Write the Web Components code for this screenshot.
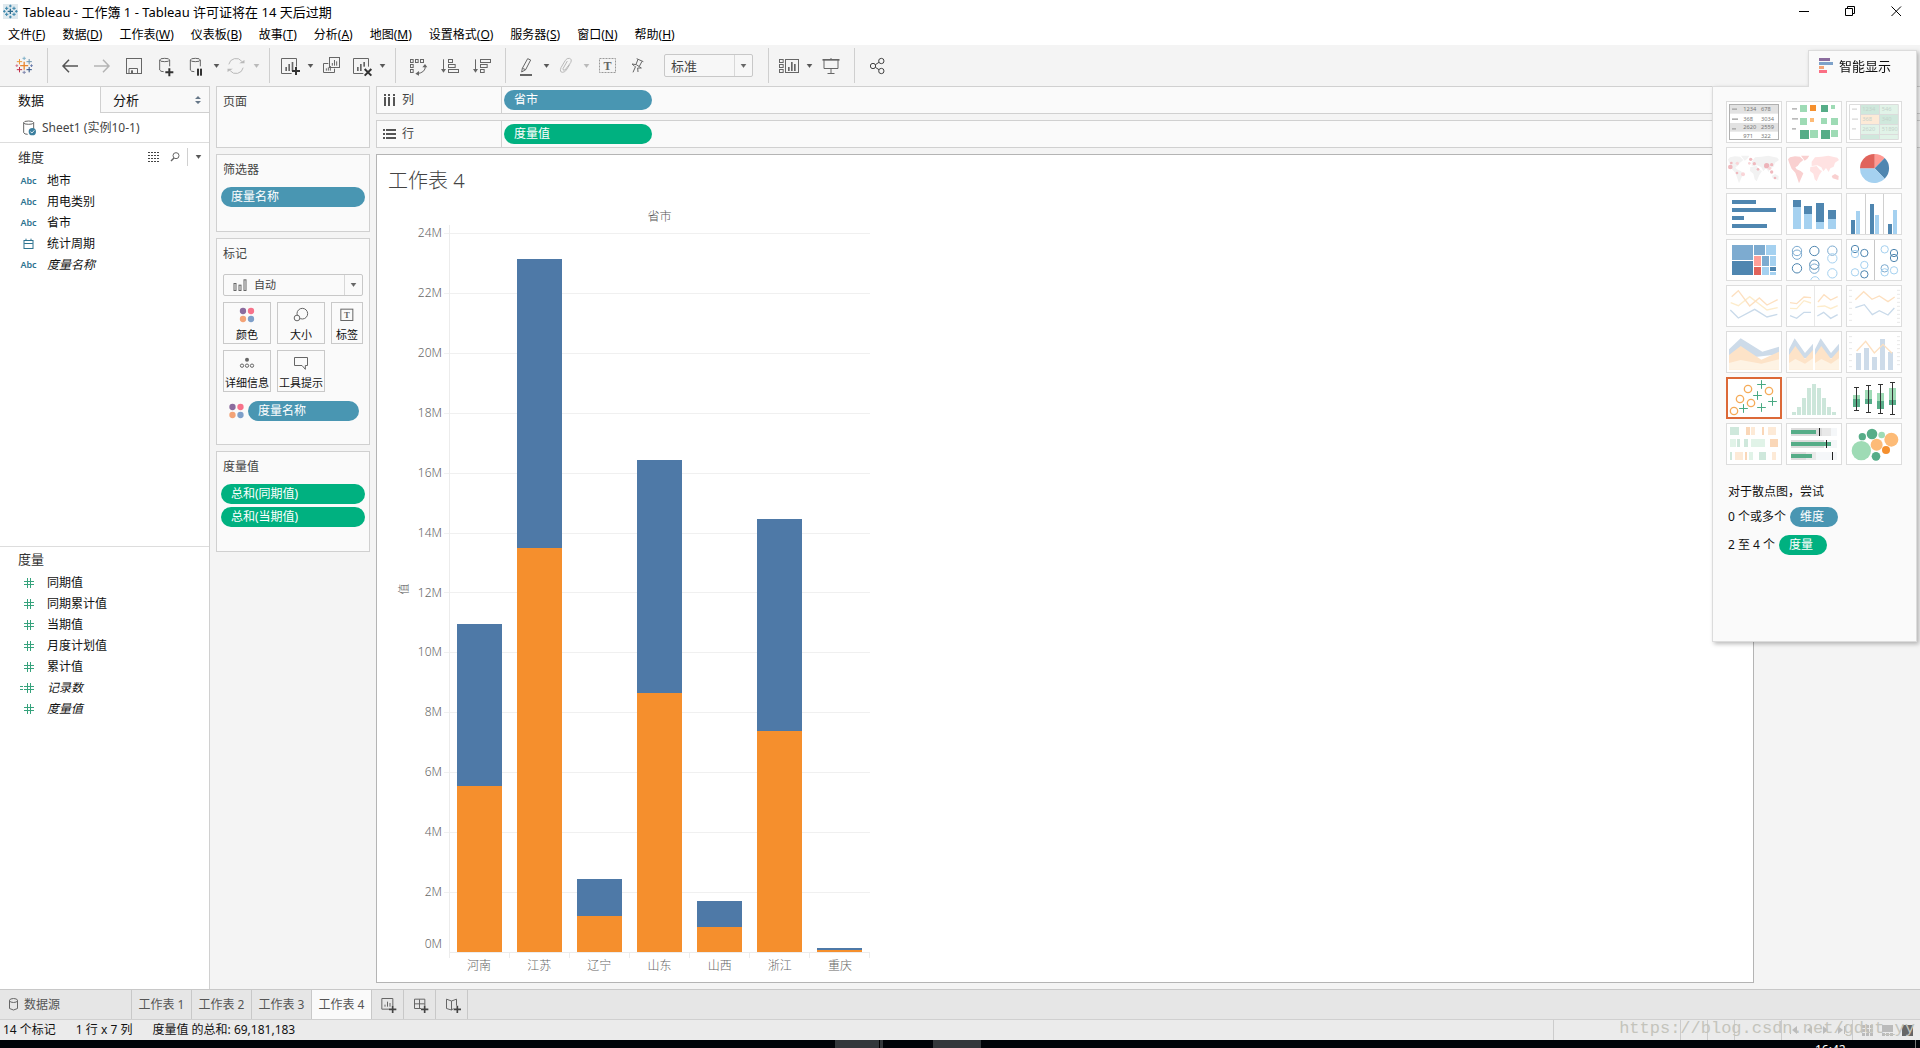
<!DOCTYPE html>
<html lang="zh-CN">
<head>
<meta charset="utf-8">
<title>Tableau - 工作簿 1</title>
<style>
  html, body { margin: 0; height: 100%; }
  body { font: 12px/16px "Noto Sans", "Noto Sans CJK SC", sans-serif; color: #111; background: #f4f4f4; overflow: hidden; }
</style>
</head>
<body>
<app-shell></app-shell>
<script>
const BASE = `*{box-sizing:border-box} button,select{font:inherit;color:inherit;margin:0;padding:0;border:0;background:none}
a{color:inherit;text-decoration:none} svg{display:block;flex:none} h1,h2,h3,ul,p{margin:0;padding:0;font:inherit;list-style:none}`;
function define(name, css, html) {
  customElements.define(name, class extends HTMLElement {
    constructor() {
      super();
      this.attachShadow({ mode: 'open' });
    }
    connectedCallback() {
      const body = typeof html === 'function' ? html(this) : html;
      this.shadowRoot.innerHTML = `<style>${BASE}${css}</style>${body}`;
    }
  });
}
/* Icons are drawn on a grid of three units per pixel. */
const icon = (cx, cy, body, w = 24, h = 24) =>
  `<svg width="${w}" height="${h}" viewBox="${cx * 3 - w * 1.5} ${cy * 3 - h * 1.5} ${w * 3} ${h * 3}" fill="none" stroke="#666" stroke-width="3" aria-hidden="true">${body}</svg>`;
const plus = (x, y, r, c, w = 3) => `<path d="M${x - r} ${y}H${x + r}M${x} ${y - r}V${y + r}" stroke="${c}" stroke-width="${w}"/>`;
const rect = (x, y, w, h, c) => `<rect x="${x}" y="${y}" width="${w}" height="${h}" fill="${c}" stroke="none"/>`;
const box = (x, y, w, h) => `<rect x="${x}" y="${y}" width="${w}" height="${h}"/>`;
const dot = (x, y, r, c) => `<circle cx="${x}" cy="${y}" r="${r}" fill="${c}" stroke="none"/>`;
const ring = (x, y, r, c) => `<circle cx="${x}" cy="${y}" r="${r}" fill="none" stroke="${c}" stroke-width="3"/>`;
const line = (d, c, w = 3) => `<path d="${d}" fill="none" stroke="${c}" stroke-width="${w}"/>`;
const area = (d, c) => `<path d="${d}" fill="${c}" stroke="none"/>`;
const cyl = (x, y) => `<ellipse cx="${x + 15}" cy="${y + 5}" rx="15" ry="5"/><path d="M${x} ${y + 5}V${y + 35}Q${x + 2} ${y + 40} ${x + 12} ${y + 40}M${x + 30} ${y + 5}V${y + 24}"/>`;
const caretSvg = (c = '#555') => `<svg width="7" height="4" viewBox="0 0 7 4" aria-hidden="true"><path d="M1 0H6L3.5 3.500Z" fill="${c}" stroke="${c}" stroke-width=".5"/></svg>`;
const fourDots = dot(-12, -12, 9.5, '#8b6c9e') + dot(12, -12, 9.5, '#f7728a') + dot(-12, 12, 9.5, '#f3a377') + dot(12, 12, 9.5, '#7e9fc9');

const ICONS = {
  logo: icon(23.5, 66, plus(71, 197, 12, '#e8852f', 4) + plus(57, 185, 8, '#eb9a3c') + plus(86, 185, 8, '#6e93ab') + plus(57, 209, 8, '#c1304a') + plus(86, 209, 8, '#2d4f85') + plus(71, 175, 5, '#7fb0c8') + plus(71, 217, 5, '#8088ae') + plus(49, 197, 4, '#d4748a') + plus(93, 197, 4, '#6d7fae')),
  back: icon(70, 66, line('M189 198H234M207 179L189 198L207 217', '#555', 4.5)),
  fwd: icon(102, 66, line('M282 198H327M309 179L327 198L309 217', '#b4b4b4', 4.5)),
  save: icon(134, 66, box(379.5, 175.5, 45, 45) + '<path d="M387 220V205.500H412.500V220"/>' + rect(393, 211, 6, 9, '#666')),
  addds: icon(166, 66, cyl(479, 175) + plus(508, 217, 12, '#333', 6)),
  pause: icon(196, 66, cyl(571, 175) + rect(591, 206, 6, 21, '#333') + rect(600, 206, 6, 21, '#333')),
  refresh: icon(235.500, 66, `<g stroke="#b9b9b9">${'<path d="M685 193A22 22 0 0 1 724 184M728 203A22 22 0 0 1 689 212"/>'}</g>` + area('M716 190H732V180ZM697 206H681V216Z', '#b9b9b9')),
  newsheet: icon(290, 66, '<path d="M889.500 200V175.500H844.500V220.500H875"/>' + rect(856, 201, 5, 12, '#666') + rect(865, 192, 5, 21, '#666') + rect(875, 186, 5, 27, '#666') + plus(888, 213, 12, '#333', 6)),
  dup: icon(331, 66, box(988.500, 172.500, 30, 30) + '<path d="M985 190.500H970.500V217.500H1003.500V206"/>' + line('M997 197V189M1003.500 197V180M1010 197V184M979 212V205M985 212V202M991 212V198', '#666')),
  clear: icon(361, 66, '<path d="M1105.500 200V175.500H1060.500V220.500H1090"/>' + rect(1071, 201, 5, 12, '#666') + rect(1080, 192, 5, 21, '#666') + rect(1090, 186, 5, 14, '#666') + line('M1094 207L1114 227M1114 207L1094 227', '#333', 6)),
  swap: icon(417, 66, box(1228.500, 178.500, 8, 9) + box(1243.500, 178.500, 8, 9) + box(1258.500, 178.500, 9, 9) + box(1228.500, 193.500, 8, 9) + box(1228.500, 208.500, 8, 9) + line('M1273 198Q1274 218 1248 221', '#666') + area('M1264 202L1272 192L1279 202ZM1254 213L1243 221L1254 227Z', '#666')),
  asc: icon(450, 66, line('M1330.500 178V214', '#666') + area('M1323 207H1338L1330.500 218Z', '#666') + box(1345.500, 178.500, 12, 9) + box(1345.500, 193.500, 20, 9) + box(1345.500, 208.500, 30, 9)),
  desc: icon(482, 66, line('M1426.500 178V214', '#666') + area('M1419 207H1434L1426.500 218Z', '#666') + box(1441.500, 178.500, 30, 9) + box(1441.500, 193.500, 20, 9) + box(1441.500, 208.500, 11, 9)),
  pen: icon(528, 66, '<g transform="translate(1440 0)"><path d="M133 205L149 176L158 180L143 209L131 216ZM133 205L143 209"/>' + rect(126, 222, 36, 6, '#666') + '</g>'),
  clip: icon(565, 66, '<g transform="translate(1440 0)" stroke="#b9b9b9"><path d="M259 183L246 206Q245 213 252 210L269 188Q274 177 265 175Q258 174 253 181L240 203Q235 216 244 217Q252 217 256 210L266 194"/></g>'),
  text: icon(607, 66, '<rect x="1798.500" y="175.500" width="48" height="42" stroke-dasharray="6 3" stroke="#999"/><text x="1822.500" y="209" font-family="Liberation Serif" font-weight="bold" font-size="36" text-anchor="middle" fill="#666" stroke="none">T</text>'),
  pin: icon(637, 66, '<g transform="translate(1440 0)"><path d="M470 176L490 185M474 178L468 193M486 184L478 199M456 192Q468 190 484 204M456 192L464 199M484 204L473 204M467 199L459 217M473 204L474 216"/></g>'),
  cards: icon(791, 66, '<g transform="translate(1440 0)">' + box(904.500, 178.500, 11, 9) + box(904.500, 193.500, 11, 9) + box(904.500, 208.500, 11, 9) + box(922.500, 178.500, 39, 39) + rect(930, 201, 5, 12, '#666') + rect(939, 186, 5, 27, '#666') + rect(948, 192, 5, 21, '#666') + '</g>'),
  present: icon(830.500, 66, '<g transform="translate(1440 0)">' + rect(1026, 177, 51, 5, '#666') + '<path d="M1030.500 180V205.500H1072.500V180M1051.500 174V178M1051.500 206V220M1041 220.500H1062"/></g>'),
  share: icon(877, 66, '<g transform="translate(1440 0)" stroke="#444">' + '<circle cx="1179" cy="198" r="8"/><circle cx="1204" cy="183" r="8"/><circle cx="1204" cy="213" r="8"/><path d="M1186 194L1197 187M1186 202L1197 209"/></g>')
};

define('title-bar', `:host{display:flex;align-items:center;height:23px;background:#fff;padding:0 1px 0 3px;color:#000}
 h1{flex:1;margin-left:5px;font-size:13px} button{width:46px;height:22px;display:grid;place-items:center}`,
 `<svg width="15" height="15" viewBox="0 0 45 45" aria-hidden="true"><rect width="45" height="45" fill="#dfe9ee"/>${plus(22, 22, 8, '#2e6c8e', 4) + plus(11, 13, 5, '#3c86ab', 3) + plus(33, 13, 5, '#3c86ab', 3) + plus(11, 31, 5, '#3c86ab', 3) + plus(33, 31, 5, '#3c86ab', 3) + plus(22, 6, 4, '#3c86ab', 3) + plus(22, 39, 4, '#3c86ab', 3) + plus(4, 22, 4, '#3c86ab', 3) + plus(40, 22, 4, '#3c86ab', 3)}</svg>
 <h1>Tableau - 工作簿 1 - Tableau 许可证将在 14 天后过期</h1>
 <button aria-label="最小化"><svg width="11" height="11"><path d="M0 5.5H10" stroke="#000"/></svg></button>
 <button aria-label="还原"><svg width="11" height="11" fill="none" stroke="#000"><path d="M.5 2.500H7.500V9.500H.5ZM2.500 2V.5H9.500V7.500H8"/></svg></button>
 <button aria-label="关闭"><svg width="11" height="11" stroke="#000"><path d="M.5 .5L10 10M10 .5L.5 10"/></svg></button>`);

define('menu-bar', `:host{display:flex;gap:17px;height:22px;padding:4px 8px 0;background:#fff;color:#000} button{height:16px;white-space:nowrap}`,
 () => [['文件', 'F'], ['数据', 'D'], ['工作表', 'W'], ['仪表板', 'B'], ['故事', 'T'], ['分析', 'A'], ['地图', 'M'], ['设置格式', 'O'], ['服务器', 'S'], ['窗口', 'N'], ['帮助', 'H']]
   .map(([t, k]) => `<button>${t}(<u>${k}</u>)</button>`).join(''));

define('tool-button', `:host{display:block;width:var(--w,32px)} button{width:100%;height:34px;display:grid;place-items:center;overflow:hidden}`,
 el => `<button aria-label="${el.getAttribute('label') || '更多'}">${el.getAttribute('icon') === 'caret' ? caretSvg(el.hasAttribute('off') ? '#b9b9b9' : '#555') : ICONS[el.getAttribute('icon')]}</button>`);

define('drop-down', `:host{display:flex;align-items:center;border:1px solid #c8c8c8;border-radius:2px;background:#fafafa;color:#444}
 select{appearance:none;flex:1;min-width:0;align-self:stretch;padding-left:6px;outline:0}
 span{width:18px;align-self:stretch;border-left:1px solid #d8d8d8;display:grid;place-items:center;pointer-events:none}`,
 el => `<slot></slot><select aria-label="${el.getAttribute('label')}"><option>${el.getAttribute('value')}</option></select><span>${caretSvg('#666')}</span>`);

const tb = (i, l, w, off = '') => `<tool-button icon="${i}" label="${l}" style="--w:${w}px" ${off}></tool-button>`;
define('tool-bar', `:host{display:flex;height:41px;align-items:center;background:#f4f4f4}
 .g{display:flex;align-items:center;height:35px;padding:0 7px 0 6px;border-right:1px solid #cfcfcf}
 .g:first-of-type{padding:0} .g:last-of-type{border:0} drop-down{width:89px;height:23px;margin:0 8px 0 12px;font-size:13px;background:#f7f7f7}`,
 `<div class="g">${tb('logo', '开始页面', 47)}</div>
 <div class="g">${tb('back', '撤消', 32) + tb('fwd', '恢复', 32) + tb('save', '保存', 32) + tb('addds', '新建数据源', 32) + tb('pause', '暂停自动更新', 28) + tb('caret', '更新选项', 12) + tb('refresh', '运行更新', 28) + tb('caret', '运行选项', 12, 'off')}</div>
 <div class="g">${tb('newsheet', '新建工作表', 28) + tb('caret', '新建选项', 12) + tb('dup', '复制', 30) + tb('clear', '清除工作表', 30) + tb('caret', '清除选项', 12)}</div>
 <div class="g">${tb('swap', '交换行和列', 32) + tb('asc', '升序排序', 32) + tb('desc', '降序排序', 32)}</div>
 <div class="g">${tb('pen', '突出显示', 28) + tb('caret', '突出显示选项', 12) + tb('clip', '组成员', 28) + tb('caret', '分组选项', 12, 'off') + tb('text', '显示标记标签', 30) + tb('pin', '固定轴', 30)}<drop-down label="适合" value="标准"></drop-down></div>
 <div class="g">${tb('cards', '显示/隐藏卡', 28) + tb('caret', '卡选项', 12) + tb('present', '演示模式', 32)}</div>
 <div class="g">${tb('share', '共享', 32)}</div>`);

define('field-item', `:host{display:block} a{display:flex;align-items:center;height:21px}
 .i{width:47px;padding-left:18px;display:flex;justify-content:center;padding-right:8px;color:#2d7390;font-size:9px;font-weight:600} :host([italic]) .t{font-style:italic}`,
 el => {
   const k = el.getAttribute('kind');
   const hash = '<path d="M-15 -4.500H15M-15 4.500H15M-4.500 -15V15M4.500 -15V15"/>';
   const g = { abc: 'Abc',
     date: icon(0, 0, '<g stroke="#2d7390"><rect x="-13.500" y="-10.500" width="27" height="24"/><path d="M-13 -1.500H13M-7.500 -10V-16M7.500 -10V-16"/></g>', 13, 12),
     num: icon(0, 0, `<g stroke="#36a27c">${hash}</g>`, 18, 12),
     calc: icon(0, 0, `<g stroke="#36a27c">${hash}<path d="M-27 -4.500H-18M-27 4.500H-18"/></g>`, 18, 12) }[k];
   return `<a href="#"><span class="i">${g}</span><span class="t"><slot></slot></span></a>`;
 });

const fields = list => list.map(([k, t, i]) => `<field-item kind="${k}" ${i || ''}>${t}</field-item>`).join('');
define('data-pane', `:host{display:flex;flex-direction:column;width:210px;background:#fff;border-right:1px solid #d0d0d0;flex:none}
 .tabs{display:flex;height:27px;font-size:13px;border-top:1px solid #d0d0d0}
 .tabs button{width:100px;padding-left:18px;text-align:left}
 .tabs .b{flex:1;display:flex;align-items:center;justify-content:space-between;background:#f9f9f9;border:1px solid #d0d0d0;border-width:0 0 1px 1px;padding:0 8px 0 12px}
 .src{display:flex;align-items:center;height:30px;padding-left:20px;gap:4px;color:#444;border-bottom:1px solid #ddd}
 .dim{flex:403 1 0;border-bottom:1px solid #ddd} .mea{flex:443 1 0}
 header{display:flex;align-items:center;height:27px;padding-left:18px;font-size:13px;color:#333} .mea header{height:26px;padding-bottom:2px}
 h2{flex:1} header button{display:grid;place-items:center;height:18px}
 .l{width:22px}.m{width:19px;margin-right:3px}.c{width:22px;border-left:1px solid #d0d0d0}`,
 `<div class="tabs" role="tablist"><button role="tab">数据</button><button role="tab" class="b">分析<svg width="6" height="8" viewBox="0 0 6 8"><path d="M0 3L3 0L6 3ZM0 5L3 8L6 5Z" fill="#667788"/></svg></button></div>
 <a class="src" href="#">${icon(29, 128, cyl(71, 363) + dot(97, 395, 11, '#3b7f9f') + line('M91 395L96 399L103 391', '#fff', 2.5), 18, 18)}<span>Sheet1 (实例10-1)</span></a>
 <section class="dim"><header><h2>维度</h2><button class="l" aria-label="查看数据"><svg width="12" height="10" stroke="#444" stroke-dasharray="2 1"><path d="M0 .5H12M0 3.500H12M0 6.500H12M0 9.500H12"/></svg></button><button class="m" aria-label="查找">${icon(0, 0, '<circle cx="3" cy="-4" r="9"/><path d="M-3 3L-12 12" stroke-width="4"/>', 12, 12)}</button><button class="c" aria-label="菜单">${caretSvg()}</button></header>
 ${fields([['abc', '地市'], ['abc', '用电类别'], ['abc', '省市'], ['date', '统计周期'], ['abc', '度量名称', 'italic']])}</section>
 <section class="mea"><header><h2>度量</h2></header>
 ${fields([['num', '同期值'], ['num', '同期累计值'], ['num', '当期值'], ['num', '月度计划值'], ['num', '累计值'], ['calc', '记录数', 'italic'], ['num', '度量值', 'italic']])}</section>`);

define('pill-tag', `:host{display:block} button{display:block;width:100%;height:20px;border-radius:10px;background:#4996b2;color:#fff;text-align:left;padding:0 10px;white-space:nowrap} :host([green]) button{background:#00b180}`,
 '<button><slot></slot></button>');

define('shelf-card', `:host{display:block;background:#fafafa;border:1px solid #d0d0d0;padding:7px 4px 0;color:#444} h3{padding:0 2px}`,
 el => `<h3>${el.getAttribute('heading')}</h3><slot></slot>`);

define('mark-button', `:host{display:block} button{width:100%;height:42px;border:1px solid #c9c9c9;background:#fafafa;display:flex;flex-direction:column;align-items:center;justify-content:space-between;padding:3px 0 0;font-size:11px;color:#111;white-space:nowrap}`,
 '<button><slot name="icon"></slot><slot></slot></button>');

const mb = (t, body) => `<mark-button><span slot="icon">${icon(0, 0, body, 20, 18)}</span>${t}</mark-button>`;
define('card-column', `:host{display:flex;flex-direction:column;gap:6px;width:154px;flex:none}
 .p{height:62px}.f{height:78px}.m{height:207px}.v{height:101px} .f pill-tag,.v pill-tag{margin-top:9px}
 .v pill-tag+pill-tag{margin-top:3px} drop-down{margin:12px 2px 6px;height:22px;font-size:11px;padding-left:9px}
 .grid{display:grid;grid-template-columns:48px 48px 32px;gap:6px;padding:0 2px}
 .row{display:flex;align-items:center;margin-top:9px;padding:0 6px 0 7px} .row pill-tag{flex:1;margin-left:3px}`,
 `<shelf-card class="p" heading="页面"></shelf-card>
 <shelf-card class="f" heading="筛选器"><pill-tag>度量名称</pill-tag></shelf-card>
 <shelf-card class="m" heading="标记">
  <drop-down label="标记类型" value="自动">${icon(0, 0, box(-19.500, -4.500, 6, 21) + box(-4.500, .5, 6, 16) + box(10.500, -15.500, 6, 32), 15, 12)}</drop-down>
  <div class="grid">${mb('颜色', fourDots)}${mb('大小', '<circle cx="4" cy="-4" r="16"/><circle cx="-12" cy="9" r="8.500" fill="#fafafa"/>')}${mb('标签', '<rect x="-18.500" y="-17.500" width="36" height="34"/><text x="-.5" y="8" font-family="Liberation Serif" font-weight="bold" font-size="26" text-anchor="middle" fill="#666" stroke="none">T</text>')}${mb('详细信息', dot(0, -10, 6, '#666') + '<circle cx="-15" cy="8" r="5"/><circle cx="0" cy="8" r="5"/><circle cx="15" cy="8" r="5"/>')}${mb('工具提示', '<path d="M-19.500 -16.500H19.500V7.500H13V19L3 7.500H-19.500Z"/>')}</div>
  <div class="row">${icon(0, 0, fourDots, 17, 18)}<pill-tag>度量名称</pill-tag></div>
 </shelf-card>
 <shelf-card class="v" heading="度量值"><pill-tag green>总和(同期值)</pill-tag><pill-tag green>总和(当期值)</pill-tag></shelf-card>`);

define('shelf-row', `:host{display:flex;height:28px;background:#fafafa;border:1px solid #d0d0d0;border-right:0;color:#444}
 .l{display:flex;align-items:center;gap:6px;width:125px;padding-left:6px;border-right:1px solid #d0d0d0} .d{padding:3px 2px;flex:1} ::slotted(pill-tag){width:148px}`,
 el => `<div class="l">${el.getAttribute('icon') === 'col'
   ? '<svg width="13" height="12" fill="#555"><path d="M1 0h2v2H1zM5 0h2v2H5zM10 0h2v2h-2zM1 3h2v9H1zM5 3h2v9H5zM10 3h2v9h-2z"/></svg>'
   : '<svg width="13" height="10" fill="#555"><path d="M0 0h2v2H0zM3 0h10v2H3zM0 4h2v2H0zM3 4h10v2H3zM0 8h2v2H0zM3 8h10v2H3z"/></svg>'}<span>${el.getAttribute('label')}</span></div><div class="d"><slot></slot></div>`);

/* Stacked bars: [name, upper segment, lower segment], in millions. */
const DATA = [['河南', 5.41, 5.55], ['江苏', 9.62, 13.5], ['辽宁', 1.23, 1.21], ['山东', 7.78, 8.66], ['山西', .87, .84], ['浙江', 7.08, 7.39], ['重庆', .07, .07]];
const MAX = 24.27;
define('bar-chart', `:host{display:grid;grid-template-columns:32px 35px 5px 421px;grid-template-rows:16px 1fr 6px 16px;color:#666;min-height:0}
 .t{grid-column:4;grid-row:1;text-align:center;color:#555;font-weight:300}
 .a{grid-column:1;grid-row:2;align-self:center;transform:rotate(-90deg);font-size:11px;font-weight:300;justify-self:end;color:#555}
 .y,.g{display:flex;flex-direction:column;grid-row:2}
 .y{grid-column:2;text-align:right;padding-right:2px;font-weight:300} .y i,.g i{flex:2 1 0;font-style:normal;min-height:0} .y i.s,.g i.s{flex:.27 1 0}
 .y b{display:block;font-weight:300;margin-top:-8px} .y .z{height:0;display:flex;align-items:flex-end;justify-content:flex-end}
 .g{grid-column:3/5} .g i+i{border-top:1px solid #f0f0f0}
 .p{grid-column:4;grid-row:2;display:flex;border-left:1px solid #ececec;z-index:1}
 .p div{flex:1;display:flex;flex-direction:column;justify-content:flex-end;padding:0 8px 0 7px}
 .p u{background:#4e79a7} .p s{background:#f58f2d}
 .k{grid-column:4;grid-row:3;display:flex;border:1px solid #ececec;border-bottom:0} .k i{flex:1} .k i+i{border-left:1px solid #ececec}
 .n{grid-column:4;grid-row:4;display:flex;font-weight:300} .n span{flex:1;text-align:center}`,
 () => `<div class="t">省市</div><div class="a">值</div>
 <div class="y"><i class="s"></i>${[24, 22, 20, 18, 16, 14, 12, 10, 8, 6, 4, 2].map(v => `<i><b>${v}M</b></i>`).join('')}<span class="z">0M</span></div>
 <div class="g"><i class="s"></i>${'<i></i>'.repeat(12)}</div>
 <div class="p">${DATA.map(([, a, b]) => `<div><u style="height:${a / MAX * 100}%"></u><s style="height:${b / MAX * 100}%"></s></div>`).join('')}</div>
 <div class="k">${'<i></i>'.repeat(7)}</div>
 <div class="n">${DATA.map(d => `<span>${d[0]}</span>`).join('')}</div>`);

define('work-sheet', `:host{display:flex;flex-direction:column;flex:1;gap:6px;min-width:0}
 .v{flex:1;display:flex;flex-direction:column;background:#fff;border:1px solid #b4b4b4;margin:0 166px 6px 0;min-height:0}
 h2{font-size:20px;line-height:30px;font-weight:300;color:#444;margin:11px 0 13px 11px} bar-chart{flex:1;margin-bottom:8px}`,
 `<shelf-row icon="col" label="列"><pill-tag>省市</pill-tag></shelf-row><shelf-row icon="row" label="行"><pill-tag green>度量值</pill-tag></shelf-row>
 <section class="v"><h2>工作表 4</h2><bar-chart></bar-chart></section>`);

const D = '#4f86b0', L = '#a5d1f0', G = '#56ad88', H = '#9edbb5';
const many = (list, f) => list.map(a => f(...a)).join('');
const numbers = (x, y, list, c) => list.map(([dx, dy, t]) => `<text x="${x + dx}" y="${y + dy}" font-size="17" font-family="Noto Sans" fill="${c}">${t}</text>`).join('');
const world = (a, b) => area('M264 358L270 352L285 349L300 350L310 360L300 368L293 378L286 382L290 388L302 393L310 400L305 412L297 430L292 415L286 398L275 386L268 370ZM303 347H328L322 356L314 362Z', a) + area('M335 365L345 352L365 350L385 347L412 353L417 360L405 368L401 380L391 385L386 396L378 384L370 394L364 382L352 376L335 378Z', b) + area('M331 381L350 378L360 390L366 393L358 405L350 424L344 418L340 401L330 393Z', b) + area('M395 408L405 402L416 408L415 420L398 415Z', a);
const THUMBS = [
 ['文本表', rect(88, 193, 148, 28, '#e2e2e2') + rect(88, 249, 148, 26, '#e2e2e2') + '<rect x="88.500" y="193.500" width="147" height="105" fill="none" stroke="#b0b0b0" stroke-width="3"/>' + many([[96, 205, 15, 5, '#b0b0b0'], [96, 235, 18, 5, '#b0b0b0'], [96, 264, 12, 5, '#b0b0b0']], rect) + numbers(130, 214, [[0, 0, '1234'], [53, 0, '678'], [0, 28, '368'], [53, 28, '3034'], [0, 54, '2620'], [53, 54, '2559'], [0, 79, '971'], [53, 79, '322']], '#777')],
 ['热图', many([[276, 204, 15, 5, '#bbb'], [276, 234, 18, 5, '#bbb'], [276, 264, 12, 5, '#bbb'], [300, 195, 21, 21, H], [330, 195, 18, 18, '#f5902e'], [363, 195, 21, 21, G], [393, 195, 12, 12, H], [300, 234, 21, 21, H], [330, 234, 12, 12, '#fdbb77'], [363, 234, 18, 18, H], [393, 234, 21, 21, H], [300, 270, 27, 27, G], [330, 270, 24, 24, H], [363, 270, 27, 27, G], [393, 270, 21, 21, H]], rect)],
 ['突出显示表', many([[483, 194, 56, 28, '#cfe8dc'], [540, 194, 55, 28, '#e1f3e8'], [483, 225, 56, 27, '#fdead7'], [540, 225, 55, 27, '#cfe8dc'], [483, 255, 112, 27, '#e1f3e8'], [483, 285, 56, 12, '#cfe8dc'], [540, 285, 55, 12, '#e1f3e8'], [456, 205, 15, 5, '#e0e0e0'], [456, 235, 18, 5, '#e0e0e0'], [456, 264, 12, 5, '#e0e0e0']], rect) + line('M448.500 193.500H595V298.500H448.500ZM481.500 194V298M538.500 194V298M481 223.500H595M481 253.500H595M481 283.500H595', '#dcdcdc') + numbers(487, 214, [[0, 0, '1234'], [58, 0, '546'], [0, 30, '368'], [58, 30, '340'], [0, 60, '2620'], [58, 60, '51890']], '#c5d2cb')],
 ['符号地图', '<g transform="translate(-180 0)">' + world('#f2f2f2', '#f2f2f2') + '</g>' + many([[91, 381, 7, '#f0b9be'], [94, 369, 4, '#f0b9be'], [112, 370, 5, '#f9d5d8'], [111, 399, 4, '#f0b9be'], [129, 403, 6, '#f9d5d8'], [148, 370, 4, '#f9d5d8'], [152, 358, 5, '#f0b9be'], [163, 371, 5, '#f0b9be'], [174, 388, 4, '#f0b9be'], [200, 377, 8, '#edb3b9'], [215, 374, 5, '#f0b9be'], [209, 385, 5, '#f9d5d8'], [215, 396, 5, '#f0b9be'], [225, 414, 4, '#f0b9be']], dot)],
 ['地图', world('#f9d0d0', '#ffe2e2')],
 ['饼图', area('M524 385V342A43 43 0 0 1 554 354Z', '#ff9a94') + area('M524 385L554 354A43 43 0 0 1 554 416Z', D) + area('M524 385L554 416A43 43 0 0 1 480 385Z', L) + area('M524 385H480A43 43 0 0 1 524 342Z', '#e0635b')],
 ['水平条', many([[96, 480, 72, 12, D], [96, 504, 132, 12, D], [96, 528, 36, 12, D], [96, 552, 105, 12, D]], rect)],
 ['堆叠条', many([[279, 480, 24, 21, D], [279, 501, 24, 66, L], [312, 498, 24, 24, D], [312, 522, 24, 45, L], [348, 489, 24, 57, D], [348, 546, 24, 21, L], [384, 510, 24, 27, D], [384, 537, 24, 30, L]], rect)],
 ['并排条', line('M496.500 460V583M550.500 460V583', '#d0d0d0') + many([[453, 540, 12, 42, D], [468, 513, 12, 69, L], [510, 492, 12, 90, D], [525, 525, 12, 57, L], [564, 552, 12, 30, D], [579, 510, 12, 72, L]], rect)],
 ['树状图', many([[96, 615, 63, 45, '#7dabd0'], [96, 663, 63, 42, D], [162, 615, 33, 30, '#7dabd0'], [198, 615, 30, 30, L], [162, 648, 21, 30, '#ff9f98'], [186, 648, 21, 30, '#7dabd0'], [210, 648, 18, 30, L], [162, 681, 21, 24, '#e0635b'], [186, 681, 21, 24, L], [210, 681, 18, 12, D], [210, 696, 18, 9, L]], rect)],
 ['圆视图', many([[291, 633, 14, '#7dabd0'], [291, 644, 14, '#7dabd0'], [291, 685, 14, D], [343, 633, 14, D], [343, 674, 14, D], [343, 686, 14, '#7dabd0'], [345, 723, 13, L], [397, 632, 14, '#7dabd0'], [397, 655, 14, L], [397, 700, 14, L]], ring)],
 ['并排圆', line('M523.500 598V721', '#c8c8c8') + many([[465, 627, 11, D], [465, 642, 11, L], [493, 639, 11, D], [493, 675, 11, L], [465, 697, 11, L], [493, 703, 11, D], [554, 628, 11, L], [582, 639, 11, D], [582, 654, 11, D], [554, 685, 11, '#7dabd0'], [554, 697, 11, L], [582, 691, 11, L]], ring)],
 ['线连续', line('M92 788L115 797L149 770L201 810L233 803', '#fdeccb', 4) + line('M95 770L115 752L149 798L178 774L201 795L233 779', '#fde0c0', 4) + line('M91 810L115 834L164 808L201 831L232 823', '#c9daea', 4)],
 ['线离散', line('M343.500 736V859', '#e8e8e8') + line('M270 805L290 806L312 782L333 789M352 800L374 798L392 806L413 797', '#fdeccb', 4) + line('M270 788L290 791L312 771L333 773M354 786L372 764L392 780L413 770', '#fde0c0', 4) + line('M270 827L290 835L312 817L333 817M352 828L371 817L392 835L413 824', '#c9daea', 4)],
 ['双线', line('M447 751H456M447 769H456M447 787H456M447 805H456M447 823H456M447 841H456M591 751H600M591 763H600M591 775H600M591 787H600M591 799H600M591 811H600M591 823H600M591 835H600M591 847H600', '#e8e8e8') + line('M466 779L491 755L516 778L538 768L564 785L584 771', '#fde0c0', 4) + line('M466 803L493 794L517 824L538 812L564 825L583 804', '#c9daea', 4)],
 ['面积连续', area('M87 928L122 895L187 935L237 920V943L87 960Z', '#cddbe9') + area('M87 945L122 918L184 959L237 935V989H87Z', '#fde3c8') + area('M87 969L122 960L184 971L237 958V989H87Z', '#fef3e4')],
 ['面积离散', area('M267 928L284 895L315 939L339 911V955H267ZM345 928L362 895L393 939L417 911V955H345Z', '#cddbe9') + area('M267 945L286 918L315 957L339 930V989H267ZM345 945L364 918L393 957L417 930V989H345Z', '#fde3c8') + area('M267 969L286 957L315 971L339 955V989H267ZM345 969L364 957L393 971L417 955V989H345Z', '#fef3e4')],
 ['双组合', many([[468, 939, 15, 51, '#cddbe9'], [492, 924, 15, 66, '#cddbe9'], [516, 951, 15, 39, '#cddbe9'], [540, 897, 15, 93, '#cddbe9'], [564, 936, 15, 54, '#cddbe9']], rect) + line('M447 890H456M447 908H456M447 926H456M447 944H456M447 962H456M447 980H456M591 890H600M591 902H600M591 914H600M591 926H600M591 938H600M591 950H600M591 962H600M591 974H600', '#e8e8e8') + line('M470 933L497 904L523 939L549 913L576 940', '#fde0c0', 4)],
 ['散点图', many([[144, 117, 11, '#f5ab58'], [207, 123, 11, '#f5ab58'], [120, 147, 11, '#f5ab58'], [153, 159, 11, '#f5ab58'], [102, 183, 11, '#f5ab58']], (x, y, r, c) => `<circle cx="${x}" cy="${y}" r="${r}" fill="none" stroke="${c}" stroke-width="4"/>`) + many([[184.500, 103.500, 13, '#48a982'], [172.500, 136.500, 13, '#48a982'], [217.500, 154.500, 13, '#48a982'], [130.500, 175.500, 13, '#48a982'], [184.500, 172.500, 13, '#48a982']], plus)],
 ['直方图', many([[276, 186, 9], [291, 171, 24], [306, 144, 51], [321, 114, 81], [336, 102, 93], [351, 114, 81], [366, 144, 51], [381, 171, 24], [396, 186, 9]], (x, y, h) => rect(x, y, 12, h, '#cce6da'))],
 ['盒须图', many([[459, 135, 147, 171, 112.5, 181.500], [495, 120, 147, 162, 106.5, 187.500], [531, 129, 153, 177, 103.5, 190.500], [567, 114, 150, 165, 97.500, 193.500]], (x, a, b, c, t, z) => rect(x, a, 21, b - a, H) + rect(x, b, 21, c - b, G) + line(`M${x + 10.5} ${t}V${z}M${x + 3} ${t}H${x + 18}M${x + 3} ${z}H${x + 18}`, '#333'))],
 ['甘特图', many([[90, 231, 27, 24, '#cfe8dc'], [138, 231, 12, 24, '#fad7b8'], [153, 231, 12, 24, '#fdead7'], [186, 231, 6, 24, '#fad7b8'], [204, 231, 24, 24, '#fdead7'], [90, 267, 18, 24, '#e1f3e8'], [111, 267, 9, 24, '#cfe8dc'], [132, 267, 12, 24, '#cfe8dc'], [153, 267, 42, 24, '#e1f3e8'], [210, 267, 24, 24, '#fad7b8'], [90, 306, 6, 24, '#cfe8dc'], [105, 306, 24, 24, '#fdead7'], [135, 306, 6, 24, '#fad7b8'], [147, 306, 12, 24, '#e1f3e8'], [177, 306, 21, 24, '#cfe8dc'], [216, 306, 12, 24, '#fdead7']], rect)],
 ['靶心图', many([[273, 234, 138, 24, '#f5f7f9'], [273, 234, 120, 24, '#e9e9e9'], [273, 234, 93, 24, '#dcdcdc'], [273, 240, 75, 12, G], [357, 234, 3, 24, '#222'], [273, 270, 138, 24, '#f5f7f9'], [273, 270, 99, 24, '#dcdcdc'], [273, 276, 120, 12, G], [378, 270, 3, 24, '#222'], [273, 306, 138, 24, '#f5f7f9'], [273, 306, 75, 24, '#e9e9e9'], [273, 306, 45, 24, '#dcdcdc'], [273, 312, 63, 12, G], [396, 306, 3, 24, '#222']], rect)],
 ['填充气泡图', many([[484, 302, 29, H], [487, 260, 11, G], [516, 252, 16, G], [545, 255, 10, H], [574, 269, 21, '#fdbb77'], [530, 284, 18, '#fdbb77'], [558, 300, 12, '#f5902e'], [528, 319, 13, G]], dot)]
];
define('show-me', `:host{display:flex;flex-direction:column;width:205px;filter:drop-shadow(2px 2px 2px #0004)}
 h2{align-self:flex-end;display:flex;align-items:center;gap:6px;width:109px;height:37px;padding:0 0 6px 10px;margin-bottom:-1px;background:#fafafa;border:1px solid #dcdcdc;border-bottom:0;font-size:13px;z-index:1}
 .b{background:#fafafa;border:1px solid #dcdcdc;height:556px;padding:14px 13px;color:#111}
 .g{display:grid;grid-template-columns:repeat(3,56px);gap:4px} .g button{display:block;width:56px;height:42px;border:1px solid #ddd;background:#fff;overflow:hidden} .g .on{border:2px solid #dc6938} .g .on svg{margin:-2px} .g svg{margin:-1px}
 p{display:flex;align-items:center;gap:4px;margin:0 2px 8px;height:20px} .g+p{margin:17px 2px 5px;} pill-tag{width:48px}`,
 () => `<h2><svg width="14" height="16"><path fill="#8b6c9e" d="M0 0h11v3H0z"/><path fill="#7ea2c9" d="M0 4h14v3H0z"/><path fill="#f3a377" d="M0 8h5v3H0z"/><path fill="#fb6f84" d="M0 12h8v3H0z"/></svg>智能显示</h2>
 <div class="b"><div class="g">${THUMBS.map(([n, body], i) => {
   const r = Math.floor(i / 3), y = r < 6 ? 183 + r * 138 : 81 + (r - 6) * 138;
   return `<button aria-label="${n}" class="${n === '散点图' ? 'on' : ''}"><svg width="56" height="42" viewBox="${78 + i % 3 * 180} ${y} 168 126">${body}</svg></button>`;
 }).join('')}</div><p>对于散点图，尝试</p><p>0 个或多个<pill-tag>维度</pill-tag></p><p>2 至 4 个<pill-tag green>度量</pill-tag></p></div>`);

define('sheet-tabs', `:host{display:flex;height:30px;background:#e6e6e6;border-top:1px solid #c8c8c8;color:#555}
 button{border-right:1px solid #c8c8c8;width:60px;display:flex;align-items:center;justify-content:center;white-space:nowrap;height:29px}
 .d{width:132px;justify-content:flex-start;padding-left:9px;gap:6px} .on{background:#fafafa} .n{width:32px}`,
 `<button class="d"><svg width="9" height="13" fill="none" stroke="#666"><ellipse cx="4.500" cy="2.500" rx="4" ry="2"/><path d="M.5 2.500V10.500Q4.500 13.500 8.500 10.500V2.500"/></svg>数据源</button>
 <button>工作表 1</button><button>工作表 2</button><button>工作表 3</button><button class="on">工作表 4</button>
 <button class="n" aria-label="新建工作表">${icon(0, 0, '<path d="M14.500 2V-19.500H-18.500V12.500H3M-9 5V-1M-1.500 5V-10M6 5V-6"/>' + plus(14, 13, 11, '#444', 5), 18, 18)}</button>
 <button class="n" aria-label="新建仪表板">${icon(0, 0, '<path d="M14.500 2V-17.500H-16.500V10.500H3M-1.500 -17V10M-16 -3.500H14"/>' + plus(14, 13, 11, '#444', 5), 18, 18)}</button>
 <button class="n" aria-label="新建故事">${icon(0, 0, '<path d="M13.500 2V-17.500L-1.500 -12L-16.500 -17.500V10.500L-1.500 15V-12M-1.500 15L4 11"/>' + plus(16, 13, 11, '#444', 5), 20, 18)}</button>`);

define('status-bar', `:host{display:flex;height:21px;background:#ebebeb;border-top:1px solid #d0d0d0;color:#111;position:relative}
 .t{flex:1;display:flex;gap:20px;padding:2px 0 0 3px} .c{border-left:1px solid #ccc;width:27px;display:flex;align-items:center;justify-content:space-between}
 .wm{position:absolute;right:5px;top:-1px;font:17px/20px "Liberation Mono",monospace;color:#c4c4bc}
 .c button{display:grid;place-items:center;height:19px;flex:1}`,
 `<div class="t"><span>14 个标记</span><span>1 行 x 7 列</span><span>度量值 的总和: 69,181,183</span></div>
 <div class="c" style="width:127px"></div><div class="c"></div><div class="c"></div><div class="c" style="width:47px"></div>
 <div class="c" style="width:71px;padding:0 3px">
 <button aria-label="第一页"><svg width="7" height="8" fill="#bbb"><path d="M0 0h1v8H0zM7 0V8L2 4z"/></svg></button><button aria-label="上一页"><svg width="5" height="8" fill="#bbb"><path d="M5 0V8L0 4z"/></svg></button><button aria-label="下一页"><svg width="5" height="8" fill="#bbb"><path d="M0 0V8L5 4z"/></svg></button><button aria-label="最后一页"><svg width="7" height="8" fill="#bbb"><path d="M6 0h1v8H6zM0 0V8L5 4z"/></svg></button></div>
 <div class="c" style="width:68px;padding:0 2px 0 4px"><button aria-label="缩略图"><svg width="11" height="11" fill="#bbb"><path d="M0 0h3v3H0zM4 0h3v3H4zM8 0h3v3H8zM0 4h3v3H0zM4 4h3v3H4zM8 4h3v3H8zM0 8h3v3H0zM4 8h3v3H4zM8 8h3v3H8z"/></svg></button><button aria-label="胶片"><svg width="11" height="11" fill="#bbb"><path d="M0 0h11v7H0zM0 8h3v3H0zM4 8h3v3H4zM8 8h3v3H8z"/></svg></button><button aria-label="单页"><svg width="11" height="11" fill="#666"><path d="M0 0h11v11H0z"/></svg></button></div>
 <span class="wm">https://blog.csdn.net/gdut_yy</span>`);

define('task-bar', `:host{display:flex;height:8px;background:#000308;overflow:hidden;color:#fff} i{background:#33373b}
 .s{flex:835 1 0} .e{flex:834 1 0} .a{width:44px;border-right:1px solid #000;box-sizing:content-box}.b{width:3px;margin-right:50px}.c{width:48px} .t{width:36px;font-size:12px;padding-top:2px} .z{width:69px;display:flex;justify-content:flex-end;padding-right:4px} .z i{width:1px;background:#777}`,
 '<span class="s"></span><i class="a"></i><i class="b"></i><i class="c"></i><span class="e"></span><span class="t">16:42</span><span class="z"><i></i></span>');

define('app-shell', `:host{display:flex;flex-direction:column;height:100vh;position:relative}
 main{flex:1;display:flex;gap:6px;min-height:0} show-me{position:absolute;right:3px;top:50px}`,
 `<title-bar></title-bar><menu-bar></menu-bar><tool-bar></tool-bar>
 <main><data-pane></data-pane><card-column></card-column><work-sheet></work-sheet></main>
 <sheet-tabs></sheet-tabs><status-bar></status-bar><task-bar></task-bar><show-me></show-me>`);
</script>
</body>
</html>
